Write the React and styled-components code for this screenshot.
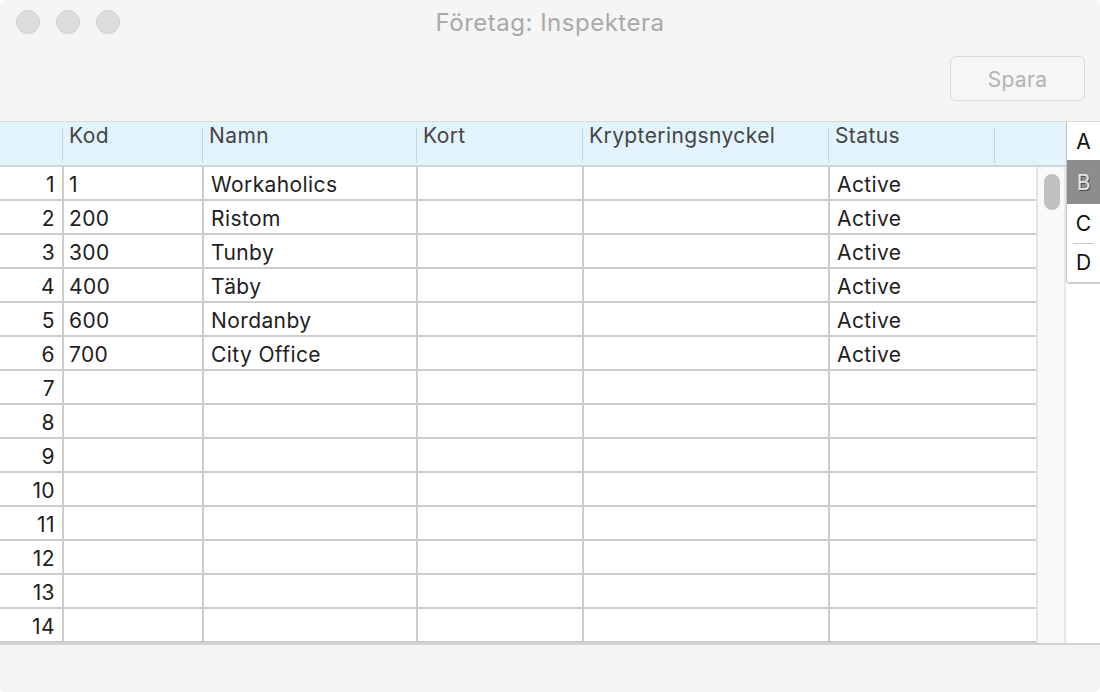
import styled, { createGlobalStyle } from 'styled-components';

const GlobalStyle = createGlobalStyle`
  html, body {
    margin: 0;
    padding: 0;
    background: #ffffff;
  }
  body {
    font-family: Inter, "Noto Sans", "Liberation Sans", sans-serif;
  }
`;

const rows = [
  { kod: '1', namn: 'Workaholics', status: 'Active' },
  { kod: '200', namn: 'Ristom', status: 'Active' },
  { kod: '300', namn: 'Tunby', status: 'Active' },
  { kod: '400', namn: 'Täby', status: 'Active' },
  { kod: '600', namn: 'Nordanby', status: 'Active' },
  { kod: '700', namn: 'City Office', status: 'Active' },
];
const totalRows = 14;
const headers = ['Kod', 'Namn', 'Kort', 'Krypteringsnyckel', 'Status'];
const letters = ['A', 'B', 'C', 'D'];

const App = () => {
  const lines = Array.from({ length: totalRows }, (_, i) => rows[i] || {});

  return (
    <WindowWithStyled>
      <GlobalStyle />
      <TopAreaWithStyled>
        <TitleBarWithStyled>
          <LightsWithStyled>
            <LightWithStyled />
            <LightWithStyled />
            <LightWithStyled />
          </LightsWithStyled>
          <TitleWithStyled>Företag: Inspektera</TitleWithStyled>
        </TitleBarWithStyled>
        <ToolbarWithStyled>
          <ButtonWithStyled>Spara</ButtonWithStyled>
        </ToolbarWithStyled>
      </TopAreaWithStyled>

      <TablePaneWithStyled>
        <TableMainWithStyled>
          <HeaderRowWithStyled>
            <HeaderCellWithStyled />
            {headers.map((h) => (
              <HeaderCellWithStyled key={h}>{h}</HeaderCellWithStyled>
            ))}
            <HeaderCellWithStyled last />
          </HeaderRowWithStyled>
          <BodyWithStyled>
            <GridWithStyled>
              {lines.map((r, i) => (
                <RowWithStyled key={i}>
                  <NumCellWithStyled>{i + 1}</NumCellWithStyled>
                  <CellWithStyled>{r.kod}</CellWithStyled>
                  <CellWithStyled wide>{r.namn}</CellWithStyled>
                  <CellWithStyled />
                  <CellWithStyled />
                  <CellWithStyled wide noBorder>{r.status}</CellWithStyled>
                </RowWithStyled>
              ))}
            </GridWithStyled>
            <ScrollTrackWithStyled>
              <ScrollThumbWithStyled />
            </ScrollTrackWithStyled>
          </BodyWithStyled>
        </TableMainWithStyled>
        <IndexColumnWithStyled>
          <TabsWithStyled>
            {letters.map((l) => (
              <TabWithStyled key={l} selected={l === 'B'} divided={l === 'D'} letter={l}>
                {l}
              </TabWithStyled>
            ))}
          </TabsWithStyled>
        </IndexColumnWithStyled>
      </TablePaneWithStyled>

      <FooterWithStyled />
    </WindowWithStyled>
  );
};

const WindowWithStyled = styled.div`
  width: 1100px;
  height: 692px;
  display: flex;
  flex-direction: column;
  background: #f5f5f5;
  border-radius: 6px;
  overflow: hidden;
`;

const TopAreaWithStyled = styled.div`
  height: 121px;
  display: flex;
  flex-direction: column;
  border-bottom: 1px solid #dadada;
`;

const TitleBarWithStyled = styled.div`
  position: relative;
  height: 45px;
  display: flex;
  align-items: center;
  justify-content: center;
`;

const LightsWithStyled = styled.div`
  position: absolute;
  left: 16px;
  top: 10px;
  display: flex;
  gap: 16px;
`;

const LightWithStyled = styled.div`
  width: 22px;
  height: 22px;
  border-radius: 50%;
  background: #dddddd;
  border: 1px solid #d0d0d0;
`;

const TitleWithStyled = styled.div`
  font-size: 24px;
  color: #a9a9a9;
  letter-spacing: 0.5px;
`;

const ToolbarWithStyled = styled.div`
  flex: 1;
  display: flex;
  justify-content: flex-end;
  align-items: flex-start;
  padding: 11px 15px 0 0;
`;

const ButtonWithStyled = styled.button`
  width: 135px;
  height: 45px;
  border: 1px solid #d9d9d9;
  border-radius: 6px;
  background: #f6f6f6;
  color: #b3b3b3;
  font-family: Inter, "Noto Sans", "Liberation Sans", sans-serif;
  font-size: 21px;
  letter-spacing: 0.3px;
  padding-top: 2px;
`;

const TablePaneWithStyled = styled.div`
  display: flex;
  background: #ffffff;
  border-bottom: 2px solid #d3d3d3;
`;

const TableMainWithStyled = styled.div`
  width: 1066px;
  display: flex;
  flex-direction: column;
`;

const HeaderRowWithStyled = styled.div`
  height: 43px;
  display: grid;
  grid-template-columns: 63px 140px 214px 166px 246px 166px 71px;
  background: #e3f3fc;
  border-bottom: 2px solid #c9d8e0;
`;

const HeaderCellWithStyled = styled.div`
  position: relative;
  padding: 1px 0 0 6px;
  font-size: 21px;
  letter-spacing: 0.4px;
  line-height: 26px;
  color: #454545;
  white-space: nowrap;

  &::after {
    content: '';
    display: ${(p) => (p.last ? 'none' : 'block')};
    position: absolute;
    right: 0;
    top: 6px;
    width: 1px;
    height: 35px;
    background: #c6d3da;
  }
`;

const BodyWithStyled = styled.div`
  display: flex;
  height: 476px;
`;

const GridWithStyled = styled.div`
  width: 1036px;
  display: flex;
  flex-direction: column;
`;

const RowWithStyled = styled.div`
  height: 32px;
  display: grid;
  grid-template-columns: 64px 140px 214px 166px 246px 206px;
  border-bottom: 2px solid #cdcdcd;
`;

const CellWithStyled = styled.div`
  border-right: ${(p) => (p.noBorder ? 'none' : '2px solid #cdcdcd')};
  padding-left: ${(p) => (p.wide ? '7px' : '5px')};
  font-size: 21px;
  letter-spacing: 0.4px;
  line-height: 35px;
  color: #1e1e1e;
  white-space: nowrap;
  overflow: hidden;
`;

const NumCellWithStyled = styled(CellWithStyled)`
  padding: 0 7px 0 0;
  text-align: right;
`;

const ScrollTrackWithStyled = styled.div`
  width: 26px;
  background: #f9f9f9;
  border-left: 2px solid #e3e3e3;
  border-right: 2px solid #e8e8e8;
  padding: 7px 0 0 6px;
`;

const ScrollThumbWithStyled = styled.div`
  width: 16px;
  height: 36px;
  border-radius: 8px;
  background: #c1c1c1;
`;

const IndexColumnWithStyled = styled.div`
  width: 34px;
  background: #ffffff;
`;

const TabsWithStyled = styled.div`
  display: flex;
  flex-direction: column;
  border-left: 1px solid #c4c4c4;
  border-bottom: 2px solid #cfcfcf;
  border-bottom-left-radius: 4px;
  overflow: hidden;
`;

const tabHeights = { A: 38, B: 44, C: 39, D: 39 };

const TabWithStyled = styled.div`
  position: relative;
  height: ${(p) => tabHeights[p.letter]}px;
  display: flex;
  align-items: center;
  justify-content: center;
  font-size: 21px;
  color: ${(p) => (p.selected ? '#e6e6e6' : '#111111')};
  background: ${(p) => (p.selected ? '#8d8d8d' : '#ffffff')};
  text-shadow: ${(p) => (p.selected ? '1px 1px 0 #4a4a4a' : 'none')};

  &::before {
    content: '';
    display: ${(p) => (p.divided ? 'block' : 'none')};
    position: absolute;
    top: 0;
    left: 6px;
    right: 6px;
    height: 1px;
    background: #c8c8c8;
  }
`;

const FooterWithStyled = styled.div`
  flex: 1;
  background: #f4f4f4;
`;

export default App;
